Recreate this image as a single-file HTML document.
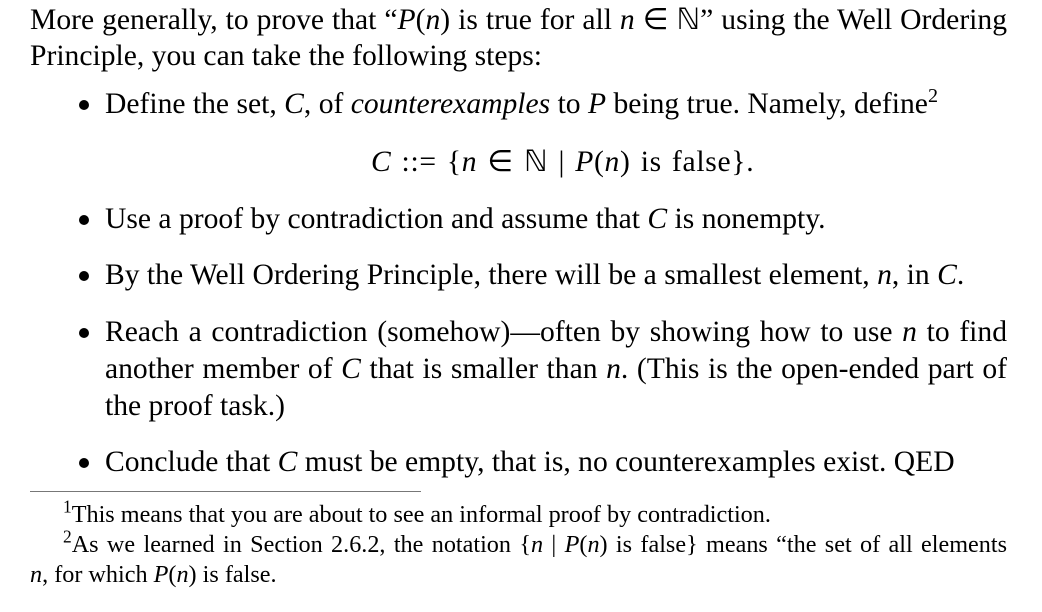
<!DOCTYPE html>
<html><head><meta charset="utf-8"><style>
body{margin:0;width:1042px;height:612px;background:#fff;position:relative;overflow:hidden;font-family:"Liberation Serif",serif;color:#000}
.l{position:absolute;font-size:29.6px;line-height:30px;white-space:nowrap}
.j{text-align:justify;text-align-last:justify;white-space:normal}
.f{position:absolute;font-size:24.2px;line-height:24px;white-space:nowrap}
i{font-style:italic}
.b{position:absolute;left:79px;top:0;width:10px;height:10px;border-radius:50%;background:#000}
sup{font-size:68%;line-height:0;vertical-align:0.55em}
.f sup{font-size:72%}
.m{letter-spacing:0.7px;word-spacing:2px}
</style></head><body>
<div class="l j" style="left:30px;top:5px;width:977px">More generally, to prove that “<i>P</i>(<i>n</i>) is true for all <i>n</i> ∈ ℕ” using the Well Ordering</div>
<div class="l" style="left:30px;top:41px">Principle, you can take the following steps:</div>

<div class="b" style="top:100px"></div>
<div class="l" style="left:105px;top:89px">Define the set, <i>C</i>, of <i>counterexamples</i> to <i>P</i> being true. Namely, define<sup>2</sup></div>
<div class="l m" style="left:371px;top:147px"><i>C</i> ::= {<i>n</i> ∈ ℕ | <i>P</i>(<i>n</i>) is false}.</div>

<div class="b" style="top:215px"></div>
<div class="l" style="left:105px;top:204px">Use a proof by contradiction and assume that <i>C</i> is nonempty.</div>

<div class="b" style="top:271px"></div>
<div class="l" style="left:105px;top:260px">By the Well Ordering Principle, there will be a smallest element, <i>n</i>, in <i>C</i>.</div>

<div class="b" style="top:328px"></div>
<div class="l j" style="left:105px;top:317px;width:902px">Reach a contradiction (somehow)—often by showing how to use <i>n</i> to find</div>
<div class="l j" style="left:105px;top:354px;width:902px">another member of <i>C</i> that is smaller than <i>n</i>. (This is the open-ended part of</div>
<div class="l" style="left:105px;top:391px">the proof task.)</div>

<div class="b" style="top:458px"></div>
<div class="l" style="left:105px;top:447px">Conclude that <i>C</i> must be empty, that is, no counterexamples exist. QED</div>

<div style="position:absolute;left:30px;top:491px;width:391px;height:1px;background:#777"></div>
<div class="f" style="left:63px;top:503px"><sup>1</sup>This means that you are about to see an informal proof by contradiction.</div>
<div class="f j" style="left:63px;top:533px;width:944px"><sup>2</sup>As we learned in Section 2.6.2, the notation {<i>n</i> | <i>P</i>(<i>n</i>) is false} means “the set of all elements</div>
<div class="f" style="left:30px;top:563px"><i>n</i>, for which <i>P</i>(<i>n</i>) is false.</div>
</body></html>
